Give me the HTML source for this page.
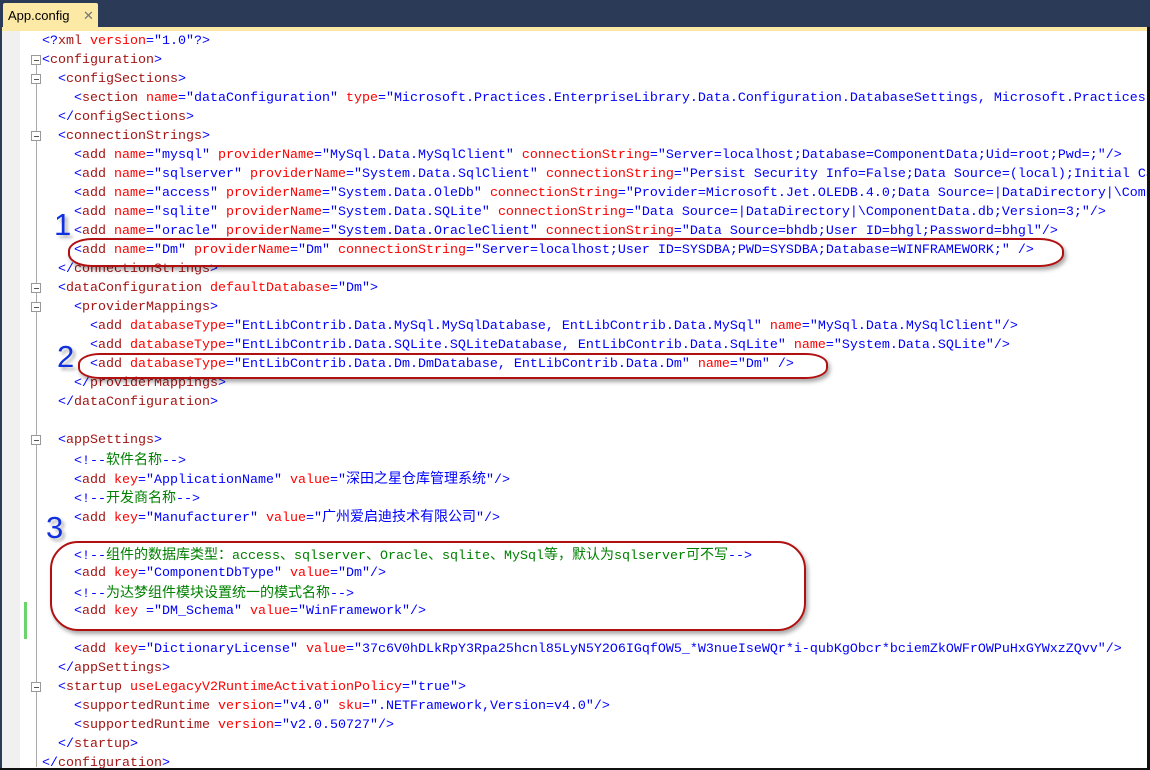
<!DOCTYPE html>
<html><head><meta charset="utf-8"><style>
body{margin:0;width:1150px;height:770px;overflow:hidden;background:#fff;position:relative;font-family:"Liberation Mono","Noto Sans CJK SC",monospace;}
#top{position:absolute;left:0;top:0;width:1150px;height:27px;background:#2b3a57;}
#strip{position:absolute;left:0;top:27px;width:1148px;height:4px;background:#fde9a6;}
#tab{position:absolute;left:3px;top:3px;width:95px;height:25px;background:#fde9a6;border-radius:2px 2px 0 0;font-family:"Liberation Sans",sans-serif;font-size:13px;line-height:25px;}
#tab span{position:absolute;left:5px;}
#tab i{position:absolute;left:80px;font-style:normal;color:#777;font-size:13px;}
#lb{position:absolute;left:0;top:0;width:2px;height:770px;background:#2b3a57;}
#rb{position:absolute;left:1147px;top:27px;width:3px;height:743px;background:#111;}
#bb{position:absolute;left:0;top:768px;width:1150px;height:2px;background:#111;}
#gut{position:absolute;left:2px;top:31px;width:18px;height:739px;background:#f0f0f0;}
#code{position:absolute;left:0;top:32px;width:1147px;height:737px;overflow:hidden;}
.l{position:absolute;left:42px;height:19px;line-height:19px;font-size:13.33px;white-space:pre;color:#0000ff;}
.t{color:#a31515}.a{color:#ff0000}.c{color:#008000}
.z{font-family:"Noto Sans CJK SC",sans-serif;font-size:14px;line-height:19px;}
.f{position:absolute;left:31px;width:8px;height:8px;border:1px solid #999;background:#fff;}
.f:after{content:"";position:absolute;left:2px;top:4px;width:5px;height:1px;background:#555;}
.vl{position:absolute;left:36px;width:1px;background:#aaa;}
.el{position:absolute;border:2px solid #b01010;box-shadow:2px 3px 4px rgba(0,0,0,.35);}
.n{position:absolute;font-family:"Liberation Sans",sans-serif;font-size:31px;color:#1030e0;text-shadow:3px 3px 3px rgba(0,0,0,.3);}
</style></head><body>
<div id="top"></div><div id="strip"></div>
<div id="tab"><span>App.config</span><i>✕</i></div>
<div id="gut"></div>
<div style="position:absolute;left:24px;top:602px;width:3px;height:37px;background:#6ad46a"></div>
<div class="vl" style="top:64px;height:703px"></div>
<div class="f" style="top:55px"></div>
<div class="f" style="top:74px"></div>
<div class="f" style="top:131px"></div>
<div class="f" style="top:283px"></div>
<div class="f" style="top:302px"></div>
<div class="f" style="top:435px"></div>
<div class="f" style="top:682px"></div>
<div id="code">
<div class="l" style="top:0">&lt;?<span class="t">xml</span> <span class="a">version</span>="1.0"?&gt;</div>
<div class="l" style="top:19px">&lt;<span class="t">configuration</span>&gt;</div>
<div class="l" style="top:38px">  &lt;<span class="t">configSections</span>&gt;</div>
<div class="l" style="top:57px">    &lt;<span class="t">section</span> <span class="a">name</span>="dataConfiguration" <span class="a">type</span>="Microsoft.Practices.EnterpriseLibrary.Data.Configuration.DatabaseSettings, Microsoft.Practices.EnterpriseLibrary.Data"/&gt;</div>
<div class="l" style="top:76px">  &lt;/<span class="t">configSections</span>&gt;</div>
<div class="l" style="top:95px">  &lt;<span class="t">connectionStrings</span>&gt;</div>
<div class="l" style="top:114px">    &lt;<span class="t">add</span> <span class="a">name</span>="mysql" <span class="a">providerName</span>="MySql.Data.MySqlClient" <span class="a">connectionString</span>="Server=localhost;Database=ComponentData;Uid=root;Pwd=;"/&gt;</div>
<div class="l" style="top:133px">    &lt;<span class="t">add</span> <span class="a">name</span>="sqlserver" <span class="a">providerName</span>="System.Data.SqlClient" <span class="a">connectionString</span>="Persist Security Info=False;Data Source=(local);Initial Catalog=ComponentData"/&gt;</div>
<div class="l" style="top:152px">    &lt;<span class="t">add</span> <span class="a">name</span>="access" <span class="a">providerName</span>="System.Data.OleDb" <span class="a">connectionString</span>="Provider=Microsoft.Jet.OLEDB.4.0;Data Source=|DataDirectory|\ComponentData.mdb"/&gt;</div>
<div class="l" style="top:171px">    &lt;<span class="t">add</span> <span class="a">name</span>="sqlite" <span class="a">providerName</span>="System.Data.SQLite" <span class="a">connectionString</span>="Data Source=|DataDirectory|\ComponentData.db;Version=3;"/&gt;</div>
<div class="l" style="top:190px">    &lt;<span class="t">add</span> <span class="a">name</span>="oracle" <span class="a">providerName</span>="System.Data.OracleClient" <span class="a">connectionString</span>="Data Source=bhdb;User ID=bhgl;Password=bhgl"/&gt;</div>
<div class="l" style="top:209px">    &lt;<span class="t">add</span> <span class="a">name</span>="Dm" <span class="a">providerName</span>="Dm" <span class="a">connectionString</span>="Server=localhost;User ID=SYSDBA;PWD=SYSDBA;Database=WINFRAMEWORK;" /&gt;</div>
<div class="l" style="top:228px">  &lt;/<span class="t">connectionStrings</span>&gt;</div>
<div class="l" style="top:247px">  &lt;<span class="t">dataConfiguration</span> <span class="a">defaultDatabase</span>="Dm"&gt;</div>
<div class="l" style="top:266px">    &lt;<span class="t">providerMappings</span>&gt;</div>
<div class="l" style="top:285px">      &lt;<span class="t">add</span> <span class="a">databaseType</span>="EntLibContrib.Data.MySql.MySqlDatabase, EntLibContrib.Data.MySql" <span class="a">name</span>="MySql.Data.MySqlClient"/&gt;</div>
<div class="l" style="top:304px">      &lt;<span class="t">add</span> <span class="a">databaseType</span>="EntLibContrib.Data.SQLite.SQLiteDatabase, EntLibContrib.Data.SqLite" <span class="a">name</span>="System.Data.SQLite"/&gt;</div>
<div class="l" style="top:323px">      &lt;<span class="t">add</span> <span class="a">databaseType</span>="EntLibContrib.Data.Dm.DmDatabase, EntLibContrib.Data.Dm" <span class="a">name</span>="Dm" /&gt;</div>
<div class="l" style="top:342px">    &lt;/<span class="t">providerMappings</span>&gt;</div>
<div class="l" style="top:361px">  &lt;/<span class="t">dataConfiguration</span>&gt;</div>
<div class="l" style="top:399px">  &lt;<span class="t">appSettings</span>&gt;</div>
<div class="l" style="top:418px">    &lt;!--<span class="c z">软件名称</span>--&gt;</div>
<div class="l" style="top:437px">    &lt;<span class="t">add</span> <span class="a">key</span>="ApplicationName" <span class="a">value</span>="<span class="z">深田之星仓库管理系统</span>"/&gt;</div>
<div class="l" style="top:456px">    &lt;!--<span class="c z">开发商名称</span>--&gt;</div>
<div class="l" style="top:475px">    &lt;<span class="t">add</span> <span class="a">key</span>="Manufacturer" <span class="a">value</span>="<span class="z">广州爱启迪技术有限公司</span>"/&gt;</div>
<div class="l" style="top:513px">    &lt;!--<span class="c"><span class="z">组件的数据库类型：</span>access<span class="z">、</span>sqlserver<span class="z">、</span>Oracle<span class="z">、</span>sqlite<span class="z">、</span>MySql<span class="z">等，默认为</span>sqlserver<span class="z">可不写</span></span>--&gt;</div>
<div class="l" style="top:532px">    &lt;<span class="t">add</span> <span class="a">key</span>="ComponentDbType" <span class="a">value</span>="Dm"/&gt;</div>
<div class="l" style="top:551px">    &lt;!--<span class="c z">为达梦组件模块设置统一的模式名称</span>--&gt;</div>
<div class="l" style="top:570px">    &lt;<span class="t">add</span> <span class="a">key</span> ="DM_Schema" <span class="a">value</span>="WinFramework"/&gt;</div>
<div class="l" style="top:608px">    &lt;<span class="t">add</span> <span class="a">key</span>="DictionaryLicense" <span class="a">value</span>="37c6V0hDLkRpY3Rpa25hcnl85LyN5Y2O6IGqfOW5_*W3nueIseWQr*i-qubKgObcr*bciemZkOWFrOWPuHxGYWxzZQvv"/&gt;</div>
<div class="l" style="top:627px">  &lt;/<span class="t">appSettings</span>&gt;</div>
<div class="l" style="top:646px">  &lt;<span class="t">startup</span> <span class="a">useLegacyV2RuntimeActivationPolicy</span>="true"&gt;</div>
<div class="l" style="top:665px">    &lt;<span class="t">supportedRuntime</span> <span class="a">version</span>="v4.0" <span class="a">sku</span>=".NETFramework,Version=v4.0"/&gt;</div>
<div class="l" style="top:684px">    &lt;<span class="t">supportedRuntime</span> <span class="a">version</span>="v2.0.50727"/&gt;</div>
<div class="l" style="top:703px">  &lt;/<span class="t">startup</span>&gt;</div>
<div class="l" style="top:722px">&lt;/<span class="t">configuration</span>&gt;</div>
</div>
<div class="el" style="left:68px;top:238px;width:992px;height:25px;border-radius:24px/13px"></div>
<div class="el" style="left:78px;top:353px;width:746px;height:22px;border-radius:22px/11px"></div>
<div class="el" style="left:50px;top:541px;width:752px;height:86px;border-radius:28px"></div>
<div class="n" style="left:54px;top:207px">1</div>
<div class="n" style="left:57px;top:339px">2</div>
<div class="n" style="left:46px;top:510px">3</div>
<div id="lb"></div><div id="rb"></div><div id="bb"></div>
</body></html>
